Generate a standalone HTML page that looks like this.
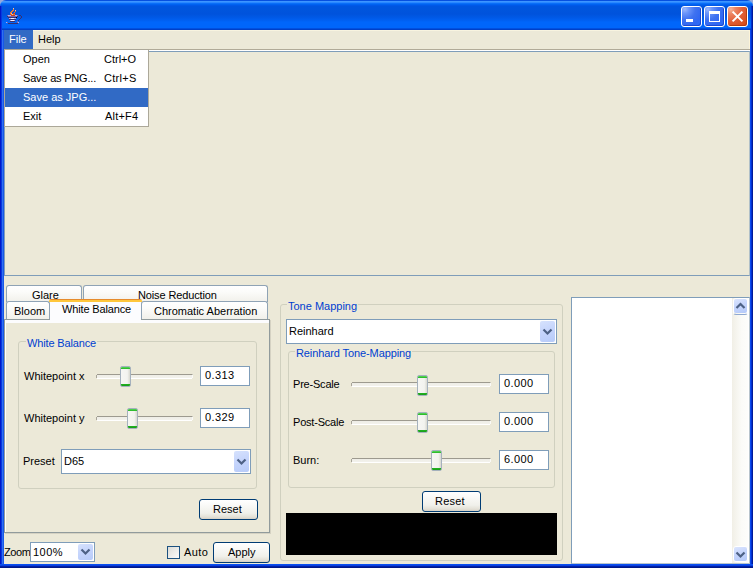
<!DOCTYPE html>
<html><head><meta charset="utf-8">
<style>
*{margin:0;padding:0;box-sizing:border-box}
html,body{width:753px;height:568px;overflow:hidden;background:#95a8dc}
body{position:relative;font-family:"Liberation Sans",sans-serif;font-size:11px;color:#000}
.a{position:absolute}
.t{position:absolute;white-space:pre;line-height:13px;font-size:11px}
#content{left:0;top:30px;width:753px;height:538px;background:#ece9d8}
#title{left:0;top:0;width:753px;height:30px;border-radius:6px 6px 0 0;
background:linear-gradient(to bottom,#0650e0 0px,#0650e0 1px,#3d95ff 1px,#3d95ff 2px,#2a88ff 2px,#2a88ff 3px,#0a6ef8 3px,#0a6ef8 4px,#0062f0 4px,#0062f0 5px,#0058e8 5px,#0058e8 6px,#0055e0 6px,#0055dd 9px,#0053dc 14px,#005ae8 18px,#0062f5 21px,#0066fb 22px,#0066fb 28px,#0050e0 28px,#0050e0 29px,#0040c8 29px,#0040c8 30px)}
.lb{left:0;top:30px;width:4px;height:538px;background:linear-gradient(to right,#0018c8 0,#0018c8 1px,#0838e0 1px,#0838e0 2px,#3070f0 2px,#3070f0 3px,#1858e8 3px)}
.lb2{left:0;top:6px;width:2px;height:24px;background:linear-gradient(to right,#0018c8 0,#0018c8 1px,#0838e0 1px)}
.rb{left:750px;top:30px;width:3px;height:538px;background:linear-gradient(to right,#0a4af0 0,#0a4af0 1px,#0030d0 1px,#0030d0 2px,#001a9a 2px)}
.rb2{left:751px;top:6px;width:2px;height:24px;background:linear-gradient(to right,#0030d0 0,#0030d0 1px,#001a9a 1px)}
.bb{left:0;top:564px;width:753px;height:4px;background:linear-gradient(to bottom,#0a4ff0 0,#0a4ff0 1px,#0a40e0 1px,#0a40e0 2px,#0020a8 2px,#0020a8 3px,#001888 3px)}
.tbtn{position:absolute;top:6px;width:21px;height:21px;border:1px solid #fff;border-radius:3px;
background:radial-gradient(circle at 15% 12%,#9cb8fc 0,#6a94fa 18%,#3f72f0 45%,#2f66f2 75%,#2a70fc 100%);box-shadow:inset -1px -1px 0 #1c48d0}
.tbtn.close{background:radial-gradient(circle at 15% 12%,#f6b49a 0,#ec8462 20%,#e2603a 50%,#d8501e 80%,#d04818 100%);box-shadow:inset -1px -1px 0 #b83c10}
.btn{position:absolute;border:1px solid #003c74;border-radius:3px;
background:linear-gradient(to bottom,#ffffff 0%,#fafaf8 25%,#f0f0ea 70%,#e3e0d6 90%,#d6d0c5 100%)}
.tf{position:absolute;border:1px solid #7f9db9;background:#fff}
.combo{position:absolute;border:1px solid #7f9db9;background:#fff}
.cbtn{position:absolute;top:1px;right:1px;width:15px;border-radius:2px;
background:linear-gradient(160deg,#d6e2fd 0%,#c6d5fc 45%,#b7cbf9 100%)}
.cbtn svg{position:absolute;left:2px}
.gb{position:absolute;border:1px solid #d0d0bf;border-radius:3px}
.gbt{position:absolute;white-space:pre;line-height:13px;color:#0040d0;background:#ece9d8;padding:0 1px}
.track{position:absolute;height:5px;background:linear-gradient(to bottom,#9d9a8f 0,#9d9a8f 1px,#eeede6 1px,#f3f2ec 4px,#fff 4px)}
.track:before{content:"";position:absolute;left:0;top:0;width:1px;height:5px;background:linear-gradient(to bottom,#ece9d8 0,#ece9d8 1px,#a8a59a 1px,#a8a59a 4px,#ece9d8 4px)}
.track:after{content:"";position:absolute;right:0;top:0;width:1px;height:5px;background:linear-gradient(to bottom,#c8c6bc 0,#c8c6bc 1px,#fafaf7 1px,#fafaf7 4px,#ece9d8 4px)}
.thumb{position:absolute;width:11px;height:21px;border:1px solid #a5b1bd;border-radius:2px;
background:linear-gradient(to right,#f6f6f3 0,#f3f3ef 70%,#d8d8d0 100%)}
.thumb:before{content:"";position:absolute;left:0;top:0;width:9px;height:2px;background:linear-gradient(to bottom,#5cd65c,#21b421);border-radius:1px 1px 0 0}
.thumb:after{content:"";position:absolute;left:0;bottom:0;width:9px;height:2px;background:linear-gradient(to bottom,#21b421,#1a9a1a);border-radius:0 0 1px 1px}
.tab{position:absolute;border:1px solid #8fa3b5;border-bottom:none;border-radius:3px 3px 0 0;
background:linear-gradient(to bottom,#ffffff 0%,#fbfbf9 40%,#f1f0ea 100%)}
</style></head><body>
<div id="content" class="a"></div>
<div id="title" class="a"></div>
<!-- java icon -->
<svg class="a" style="left:0;top:0" width="26" height="26" shape-rendering="crispEdges"><rect x="13" y="8" width="1" height="1" fill="#f8c898"/><rect x="13" y="9" width="1" height="1" fill="#e87838"/><rect x="12" y="10" width="2" height="1" fill="#e87838"/><rect x="15" y="10" width="1" height="1" fill="#f8c898"/><rect x="11" y="11" width="2" height="1" fill="#e87838"/><rect x="15" y="11" width="1" height="1" fill="#e87838"/><rect x="10" y="12" width="2" height="1" fill="#e87838"/><rect x="14" y="12" width="1" height="1" fill="#e87838"/><rect x="10" y="13" width="1" height="1" fill="#e87838"/><rect x="11" y="13" width="1" height="1" fill="#f8c898"/><rect x="13" y="13" width="2" height="1" fill="#c84020"/><rect x="10" y="14" width="1" height="1" fill="#c84020"/><rect x="11" y="14" width="1" height="1" fill="#e87838"/><rect x="12" y="14" width="1" height="1" fill="#f8c898"/><rect x="13" y="14" width="2" height="1" fill="#e87838"/><rect x="11" y="15" width="4" height="1" fill="#c84020"/><rect x="7" y="15" width="1" height="1" fill="#7068b8"/><rect x="8" y="15" width="3" height="1" fill="#b4aceb"/><rect x="15" y="15" width="2" height="1" fill="#b4aceb"/><rect x="17" y="15" width="1" height="1" fill="#7068b8"/><rect x="7" y="16" width="11" height="1" fill="#383070"/><rect x="8" y="16" width="9" height="1" fill="#7068b8"/><rect x="8" y="17" width="9" height="1" fill="#383070"/><rect x="16" y="17" width="1" height="1" fill="#000"/><rect x="9" y="18" width="7" height="1" fill="#b4aceb"/><rect x="11" y="18" width="3" height="1" fill="#f0f0ff"/><rect x="9" y="19" width="7" height="1" fill="#383070"/><rect x="10" y="20" width="5" height="1" fill="#b4aceb"/><rect x="11" y="20" width="3" height="1" fill="#f0f0ff"/><rect x="10" y="21" width="5" height="1" fill="#383070"/><rect x="19" y="15" width="2" height="1" fill="#383070"/><rect x="21" y="16" width="1" height="2" fill="#383070"/><rect x="20" y="18" width="1" height="1" fill="#383070"/><rect x="19" y="19" width="1" height="1" fill="#383070"/><rect x="18" y="20" width="1" height="1" fill="#383070"/><rect x="17" y="21" width="1" height="1" fill="#7068b8"/><rect x="6" y="22" width="1" height="1" fill="#b4aceb"/><rect x="7" y="22" width="1" height="1" fill="#7068b8"/><rect x="8" y="23" width="10" height="1" fill="#383070"/><rect x="18" y="22" width="1" height="1" fill="#b4aceb"/><rect x="17" y="22" width="1" height="1" fill="#7068b8"/></svg>
<div class="tbtn" style="left:681px"><div class="a" style="left:4px;top:12px;width:7px;height:3px;background:#fff"></div></div>
<div class="tbtn" style="left:704px"><div class="a" style="left:4px;top:4px;width:11px;height:11px;border:1px solid #fff;border-top-width:3px"></div></div>
<div class="tbtn close" style="left:727px"><svg class="a" style="left:0;top:0" width="19" height="19"><path d="M4.6 4.6 L14.4 14.4 M14.4 4.6 L4.6 14.4" stroke="#fff" stroke-width="2"/></svg></div>

<!-- menubar -->
<div class="a" style="left:4px;top:30px;width:746px;height:1px;background:#f8f4e0"></div>
<div class="a" style="left:749px;top:30px;width:1px;height:19px;background:#fcf4d8"></div>
<div class="a" style="left:4px;top:49px;width:746px;height:1px;background:#b0aa98"></div>
<div class="a" style="left:4px;top:50px;width:746px;height:1px;background:#fff"></div>
<div class="a" style="left:4px;top:30px;width:29px;height:19px;background:#316ac5"></div>
<div class="t" style="left:9px;top:33px;color:#fff">File</div>
<div class="t" style="left:38px;top:33px">Help</div>

<!-- image area -->
<div class="a" style="left:4px;top:51px;width:746px;height:225px;border:1px solid #7f9db9;border-right:1px solid #b0c0c8"></div>

<!-- tabs back row -->
<div class="tab" style="left:6px;top:285px;width:76px;height:17px"></div>
<div class="t" style="left:32px;top:289px">Glare</div>
<div class="tab" style="left:83px;top:285px;width:185px;height:17px"></div>
<div class="t" style="left:138px;top:289px;letter-spacing:-0.13px">Noise Reduction</div>
<!-- content panel -->
<div class="a" style="left:4px;top:319px;width:266px;height:214px;border:1px solid #919b9c;background:linear-gradient(to bottom,#fcfcfe 0,#fcfcfe 3px,#ece9d8 3px)"></div>
<div class="a" style="left:5px;top:320px;width:1px;height:212px;background:#fff"></div>
<div class="a" style="left:270px;top:320px;width:1px;height:214px;background:#d5d2c3"></div>
<div class="a" style="left:5px;top:533px;width:266px;height:1px;background:#d5d2c3"></div>
<!-- front row -->
<div class="tab" style="left:6px;top:301px;width:44px;height:18px"></div>
<div class="t" style="left:14px;top:305px">Bloom</div>
<div class="tab" style="left:141px;top:301px;width:127px;height:18px"></div>
<div class="t" style="left:154px;top:305px">Chromatic Aberration</div>
<!-- selected tab -->
<div class="a" style="left:50px;top:301px;width:91px;height:22px;background:#fcfcfe"></div>
<div class="a" style="left:49px;top:299px;width:93px;height:3px;border-radius:2px 2px 0 0;background:linear-gradient(to bottom,#e68b2c 0,#e68b2c 1px,#ffc73c 1px)"></div>
<div class="t" style="left:62px;top:303px;letter-spacing:-0.15px">White Balance</div>

<!-- white balance group -->
<div class="gb" style="left:18px;top:341px;width:239px;height:148px"></div>
<div class="gbt" style="left:26px;top:337px;letter-spacing:-0.15px">White Balance</div>
<div class="t" style="left:24px;top:370px">Whitepoint x</div>
<div class="track" style="left:96px;top:374px;width:97px"></div>
<div class="thumb" style="left:120px;top:366px"></div>
<div class="tf" style="left:200px;top:366px;width:50px;height:20px"><div class="t" style="left:4px;top:2px;letter-spacing:0.4px">0.313</div></div>
<div class="t" style="left:24px;top:412px">Whitepoint y</div>
<div class="track" style="left:96px;top:416px;width:97px"></div>
<div class="thumb" style="left:127px;top:408px"></div>
<div class="tf" style="left:200px;top:408px;width:50px;height:20px"><div class="t" style="left:4px;top:2px;letter-spacing:0.4px">0.329</div></div>
<div class="t" style="left:23px;top:455px">Preset</div>
<div class="combo" style="left:61px;top:449px;width:190px;height:25px"><div class="t" style="left:2px;top:5px">D65</div>
<div class="cbtn" style="height:21px"><svg style="top:7px" width="11" height="8"><path d="M1.5 1.5 L5.5 5.5 L9.5 1.5" stroke="#4d6185" stroke-width="2.2" fill="none"/></svg></div></div>
<div class="btn" style="left:199px;top:499px;width:59px;height:21px"><div class="t" style="left:13px;top:3px">Reset</div></div>

<!-- zoom row -->
<div class="t" style="left:4px;top:546px;letter-spacing:-0.4px">Zoom</div>
<div class="combo" style="left:30px;top:542px;width:65px;height:20px"><div class="t" style="left:2px;top:3px;letter-spacing:0.5px">100%</div>
<div class="cbtn" style="height:16px"><svg style="top:4px" width="11" height="8"><path d="M1.5 1.5 L5.5 5.5 L9.5 1.5" stroke="#4d6185" stroke-width="2.2" fill="none"/></svg></div></div>
<div class="a" style="left:167px;top:546px;width:13px;height:13px;border:1px solid #1c5180;background:linear-gradient(135deg,#dcdcd7,#fbfbfa)"></div>
<div class="t" style="left:184px;top:546px;letter-spacing:0.4px">Auto</div>
<div class="btn" style="left:213px;top:542px;width:57px;height:21px"><div class="t" style="left:14px;top:3px">Apply</div></div>

<!-- tone mapping -->
<div class="gb" style="left:280px;top:304px;width:283px;height:257px"></div>
<div class="gbt" style="left:287px;top:300px">Tone Mapping</div>
<div class="combo" style="left:286px;top:319px;width:271px;height:25px"><div class="t" style="left:2px;top:5px">Reinhard</div>
<div class="cbtn" style="height:21px"><svg style="top:7px" width="11" height="8"><path d="M1.5 1.5 L5.5 5.5 L9.5 1.5" stroke="#4d6185" stroke-width="2.2" fill="none"/></svg></div></div>
<div class="gb" style="left:288px;top:351px;width:267px;height:137px"></div>
<div class="gbt" style="left:295px;top:347px;letter-spacing:-0.1px">Reinhard Tone-Mapping</div>
<div class="t" style="left:293px;top:378px;letter-spacing:-0.2px">Pre-Scale</div>
<div class="track" style="left:351px;top:382px;width:140px"></div>
<div class="thumb" style="left:417px;top:375px"></div>
<div class="tf" style="left:499px;top:374px;width:50px;height:20px"><div class="t" style="left:4px;top:2px;letter-spacing:0.4px">0.000</div></div>
<div class="t" style="left:293px;top:416px;letter-spacing:-0.2px">Post-Scale</div>
<div class="track" style="left:351px;top:420px;width:140px"></div>
<div class="thumb" style="left:417px;top:412px"></div>
<div class="tf" style="left:499px;top:412px;width:50px;height:20px"><div class="t" style="left:4px;top:2px;letter-spacing:0.4px">0.000</div></div>
<div class="t" style="left:293px;top:454px">Burn:</div>
<div class="track" style="left:351px;top:458px;width:140px"></div>
<div class="thumb" style="left:431px;top:450px"></div>
<div class="tf" style="left:499px;top:450px;width:50px;height:20px"><div class="t" style="left:4px;top:2px;letter-spacing:0.4px">6.000</div></div>
<div class="btn" style="left:422px;top:491px;width:59px;height:21px"><div class="t" style="left:12px;top:3px;letter-spacing:0.2px">Reset</div></div>
<div class="a" style="left:286px;top:513px;width:271px;height:42px;background:#000"></div>

<!-- right text area -->
<div class="a" style="left:571px;top:297px;width:179px;height:267px;border:1px solid #7f9db9;border-right:1px solid #b8c4cc;border-bottom:1px solid #b8c4cc;background:#fff"></div>
<div class="a" style="left:732px;top:298px;width:16px;height:265px;background:linear-gradient(to right,#f1efe6,#fbfbf8 60%,#fdfdfb)"></div>
<div class="a" style="left:733px;top:298px;width:15px;height:17px;border:1px solid #fff;border-bottom-color:#8fa8d0;border-radius:3px"></div>
<div class="a" style="left:734px;top:299px;width:13px;height:14px;border-radius:2px;background:linear-gradient(160deg,#dbe5fe 0%,#c6d5fc 45%,#b4c9f9 100%)"><svg class="a" style="left:1px;top:3px" width="11" height="8"><path d="M1.5 6 L5.5 2 L9.5 6" stroke="#4d6185" stroke-width="2.2" fill="none"/></svg></div>
<div class="a" style="left:733px;top:546px;width:15px;height:16px;border:1px solid #fff;border-radius:3px"></div>
<div class="a" style="left:734px;top:547px;width:13px;height:14px;border-radius:2px;background:linear-gradient(160deg,#dbe5fe 0%,#c6d5fc 45%,#b4c9f9 100%)"><svg class="a" style="left:1px;top:4px" width="11" height="8"><path d="M1.5 1.5 L5.5 5.5 L9.5 1.5" stroke="#4d6185" stroke-width="2.2" fill="none"/></svg></div>

<!-- popup menu -->
<div class="a" style="left:4px;top:49px;width:145px;height:78px;border:1px solid #aca899;background:#fff"></div>
<div class="a" style="left:5px;top:88px;width:143px;height:19px;background:#316ac5"></div>
<div class="t" style="left:23px;top:53px">Open</div>
<div class="t" style="left:104px;top:53px">Ctrl+O</div>
<div class="t" style="left:23px;top:72px;letter-spacing:-0.2px">Save as PNG...</div>
<div class="t" style="left:104px;top:72px;letter-spacing:0.3px">Ctrl+S</div>
<div class="t" style="left:23px;top:91px;color:#fff">Save as JPG...</div>
<div class="t" style="left:23px;top:110px">Exit</div>
<div class="t" style="left:105px;top:110px;letter-spacing:0.2px">Alt+F4</div>

<div class="a lb"></div><div class="a lb2"></div><div class="a rb"></div><div class="a rb2"></div><div class="a bb"></div>
</body></html>
